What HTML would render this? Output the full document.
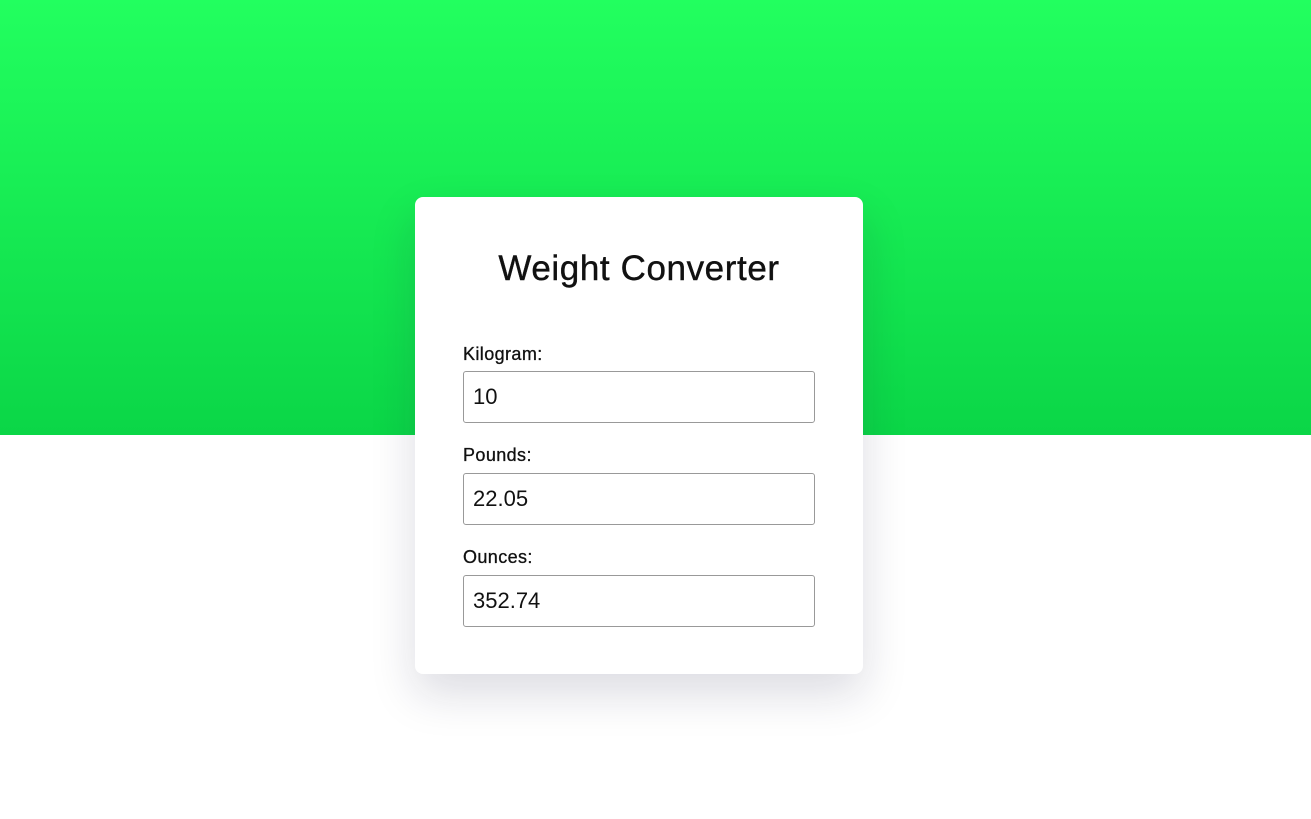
<!DOCTYPE html>
<html><head><style>
html,body{margin:0;padding:0;width:1311px;height:819px;overflow:hidden;background:#fff;font-family:"Liberation Sans",sans-serif;}
.bg{position:absolute;left:0;top:0;width:1311px;height:435px;background:linear-gradient(#22ff5f,#0bd647);}
.card{position:absolute;left:415px;top:197px;width:448px;height:477px;background:#fff;border-radius:8px;box-shadow:0 20px 45px rgba(20,20,60,0.15);}
h1{position:absolute;top:50px;left:0;width:448px;margin:0;text-align:center;font-size:35px;font-weight:normal;letter-spacing:0.6px;color:#111;line-height:44px;-webkit-text-stroke:0.4px #111;}
label{position:absolute;left:48px;font-size:18px;letter-spacing:0.4px;color:#111;line-height:20px;-webkit-text-stroke:0.3px #111;}
.in{position:absolute;left:48px;width:341px;height:50px;border:1px solid #999;border-radius:3px;font-size:22px;line-height:50px;padding-left:9px;box-sizing:content-box;color:#111;}
</style></head><body>
<div class="bg"></div>
<div class="card">
<h1>Weight Converter</h1>
<label style="top:147px">Kilogram:</label>
<div class="in" style="top:174px">10</div>
<label style="top:248px">Pounds:</label>
<div class="in" style="top:276px">22.05</div>
<label style="top:350px">Ounces:</label>
<div class="in" style="top:378px">352.74</div>
</div>
</body></html>
